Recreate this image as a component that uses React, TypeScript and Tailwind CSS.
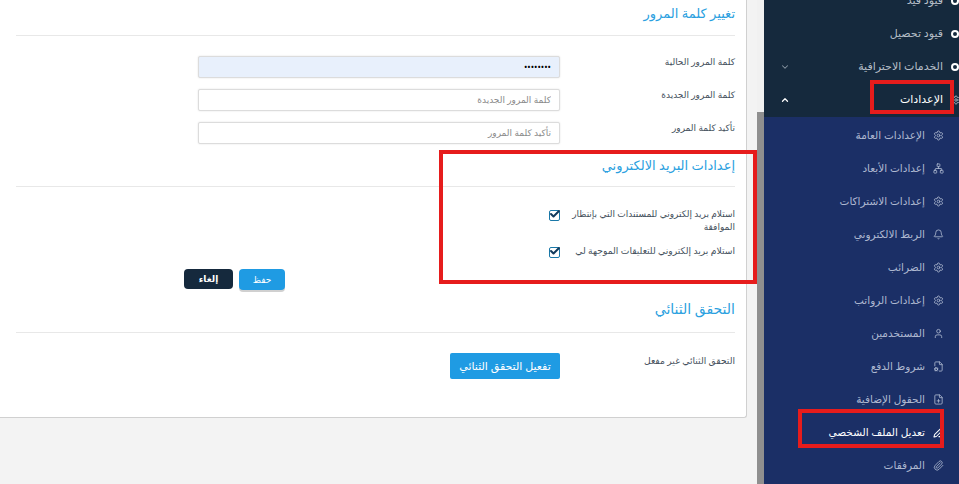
import { Settings, Network, Bell, User, FileCog, FilePlus, PenLine, Paperclip, ChevronDown, ChevronUp, Check } from "lucide-react";

const subItems = [
  { label: "الإعدادات العامة", icon: Settings },
  { label: "إعدادات الأبعاد", icon: Network },
  { label: "إعدادات الاشتراكات", icon: Settings },
  { label: "الربط الالكتروني", icon: Bell },
  { label: "الضرائب", icon: Settings },
  { label: "إعدادات الرواتب", icon: Settings },
  { label: "المستخدمين", icon: User },
  { label: "شروط الدفع", icon: FileCog },
  { label: "الحقول الإضافية", icon: FilePlus },
  { label: "تعديل الملف الشخصي", icon: PenLine, active: true },
  { label: "المرفقات", icon: Paperclip },
];

function SectionTitle({ children, className, large }: { children: string; className: string; large?: boolean }) {
  return (
    <div className={`border-b border-[#e8e8e8] ${className}`}>
      <h2 className={`${large ? "text-[14px]" : "text-[13px]"} leading-[20px] font-normal text-[#2b9fe0]`}>{children}</h2>
    </div>
  );
}

function PasswordRow({ label, placeholder, value }: { label: string; placeholder: string; value?: string }) {
  return (
    <div className="flex h-[22px] items-center">
      <label className="w-[175px] text-[9px] leading-[12px] -mt-[11px] text-[#44505c]">{label}</label>
      <input
        readOnly
        type={value ? "password" : "text"}
        value={value}
        placeholder={placeholder}
        className={`h-[22px] w-[362px] rounded-[2px] border border-[#dcdcdc] px-2 pb-[2px] text-[9px] shadow-[0_0_2px_rgba(0,0,0,0.12)] outline-none placeholder:text-[#8a8a8a] ${value ? "bg-[#e8f0fc] text-black" : "bg-white"}`}
      />
    </div>
  );
}

function CheckBox() {
  return (
    <span className="relative mr-[10px] mt-[1px] block h-[11px] w-[11px] shrink-0 rounded-[2px] border border-[#1a78a8] bg-white">
      <Check className="absolute -top-[3px] -left-[1px] h-[12px] w-[12px] text-[#123a5c]" strokeWidth={4} />
    </span>
  );
}

export default function App() {
  return (
    <div dir="rtl" className="flex h-[484px] w-[959px] overflow-hidden bg-[#f3f3f3] font-['Noto_Sans','DejaVu_Sans',sans-serif]">
      {/* Sidebar */}
      <aside className="flex w-[195px] shrink-0 flex-col bg-[#1b2f66]">
        <div className="-mt-[16px] flex h-[133px] shrink-0 flex-col bg-[#15293d]">
          {["قيود قيد", "قيود تحصيل", "الخدمات الاحترافية"].map((label, i) => (
            <div key={label} className="flex h-[33px] items-center text-[11px] text-[#b4bdc6]">
              <span className="h-[8px] w-[8px] shrink-0 rounded-full border-[2px] border-white" />
              <span className="mr-[8px] flex-1">{label}</span>
              {i === 2 && <ChevronDown className="ml-[16px] h-[10px] w-[10px] text-[#8996a3]" strokeWidth={2.5} />}
            </div>
          ))}
          <div className="flex h-[33px] items-center text-[11px] text-white">
            <Settings className="-mr-[2px] h-[10px] w-[10px] shrink-0 text-[#b4bdc6]" />
            <span className="mr-[8px] flex-1">الإعدادات</span>
            <ChevronUp className="ml-[16px] h-[10px] w-[10px]" strokeWidth={3} />
          </div>
        </div>
        <nav className="flex flex-col pt-[2px]">
          {subItems.map(({ label, icon: Icon, active }) => (
            <div key={label} className={`flex h-[33px] shrink-0 items-center pr-[15px] text-[10.5px] ${active ? "text-white" : "text-[#aeb8d0]"}`}>
              <Icon className="h-[11px] w-[11px] shrink-0" strokeWidth={active ? 2.2 : 1.8} />
              <span className="mr-[8px]">{label}</span>
            </div>
          ))}
        </nav>
      </aside>

      {/* Page scrollbar */}
      <div className="flex w-[7px] shrink-0 flex-col">
        <div className="h-[112px] bg-[#f1f1f1]" />
        <div className="flex-1 bg-[#8f8f8f]" />
      </div>

      {/* Main */}
      <main className="flex-1 pr-[10px]">
        <div className="h-[418px] rounded-br-[3px] border-r border-b border-[#d0d0d0] bg-white pr-[11px] pl-[16px]">
          <SectionTitle className="pt-[3px] pb-[12px]">تغيير كلمة المرور</SectionTitle>
          <div className="mt-[20px] flex flex-col gap-[11px]">
            <PasswordRow label="كلمة المرور الحالية" placeholder="" value="password" />
            <PasswordRow label="كلمة المرور الجديدة" placeholder="كلمة المرور الجديدة" />
            <PasswordRow label="تأكيد كلمة المرور" placeholder="تأكيد كلمة المرور" />
          </div>

          <SectionTitle className="mt-[11px] pb-[11px]">إعدادات البريد الالكتروني</SectionTitle>
          <div className="mt-[22px] flex flex-col gap-[13px]">
            <div className="flex items-start">
              <p className="-mt-[2px] w-[165px] text-[9px] leading-[13px] text-[#44505c]">استلام بريد إلكتروني للمستندات التي بإنتظار الموافقة</p>
              <CheckBox />
            </div>
            <div className="flex items-start">
              <p className="-mt-[2px] w-[165px] text-[9.2px] leading-[13px] text-[#44505c]">استلام بريد إلكتروني للتعليقات الموجهة لي</p>
              <CheckBox />
            </div>
          </div>

          <div className="mt-[11px] mr-[450px] flex items-start gap-[6px]">
            <button className="h-[21px] w-[46px] rounded-[4px] bg-[#1f9be3] text-[9px] text-white shadow-[0_2px_0_#d0d0d0]">حفظ</button>
            <button className="h-[20px] w-[49px] rounded-[4px] bg-[#15293d] text-[9px] font-bold text-white">إلغاء</button>
          </div>

          <SectionTitle large className="mt-[9px] pb-[13px]">التحقق الثنائي</SectionTitle>
          <div className="mt-[20px] flex items-start">
            <span className="w-[175px] pt-[2px] text-[9.2px] leading-[12px] text-[#44505c]">التحقق الثنائي غير مفعل</span>
            <button className="h-[26px] w-[110px] rounded-[2px] bg-[#1f9be3] text-[11px] text-white">تفعيل التحقق الثنائي</button>
          </div>
        </div>
      </main>

      {/* Annotations */}
      <div className="pointer-events-none absolute top-0 left-0 h-[484px] w-[959px]" dir="ltr">
        <div className="absolute left-[870px] top-[80px] h-[34px] w-[84px] border-[4px] border-[#e61c1c]" />
        <div className="absolute left-[439px] top-[150px] h-[134px] w-[318px] border-[4px] border-[#e61c1c]" />
        <div className="absolute left-[798px] top-[409px] h-[39px] w-[146px] border-[4px] border-[#e61c1c]" />
      </div>
    </div>
  );
}
